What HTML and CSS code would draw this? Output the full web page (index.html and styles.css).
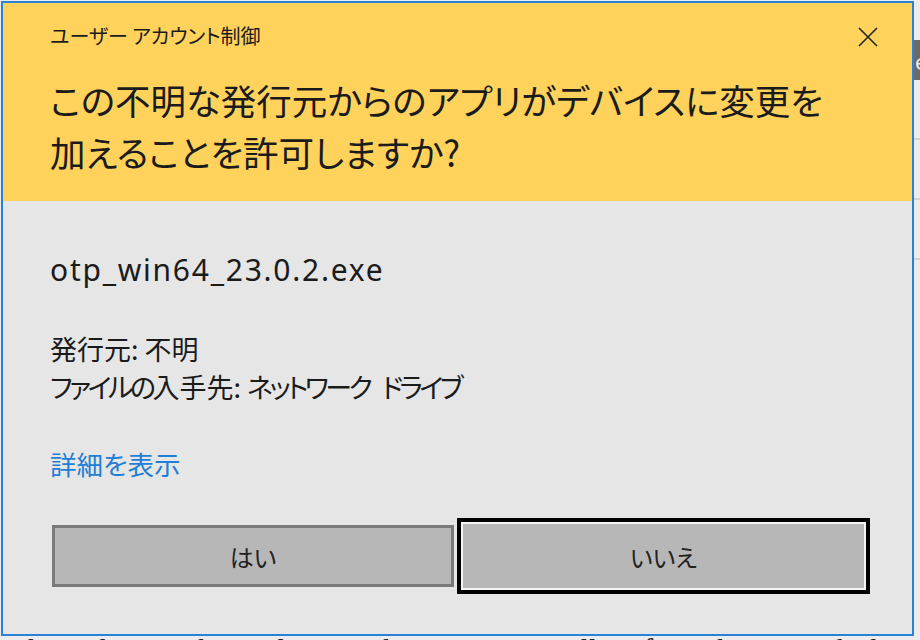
FILE: index.html
```html
<!DOCTYPE html>
<html lang="ja">
<head>
    <meta charset="utf-8">
    <title>ユーザー アカウント制御</title>
    <link rel="stylesheet" href="styles.css">
</head>
<body>
<div class="page">
    <div class="page-side">
        <div class="side-tab">e</div>
        <div class="side-rule"></div>
        <div class="side-rule"></div>
        <div class="side-rule"></div>
    </div>
    <p class="page-text">depending on the application that you are installing from the network share</p>
</div>

<div class="uac" role="dialog">
    <div class="uac-head">
        <div class="uac-titlebar">
            <span class="uac-title">ユーザー アカウント制御</span>
            <span class="uac-close">
                <svg width="20" height="20" viewBox="0 0 20 20"><path d="M1 1 L19 19 M19 1 L1 19" stroke="#222" stroke-width="1.6" fill="none"/></svg>
            </span>
        </div>
        <h1 class="uac-question">この不明な発行元からのアプリがデバイスに変更を<br>加えることを許可しますか?</h1>
    </div>
    <div class="uac-body">
        <div class="uac-file">otp_win64_23.0.2.exe</div>
        <div class="uac-info">
            <div>発行元: 不明</div>
            <div><span class="kana">ファイルの</span>入手先: <span class="kana">ネットワーク</span> <span class="kana gap">ドライブ</span></div>
        </div>
        <a class="uac-more" href="#">詳細を表示</a>
        <div class="uac-buttons">
            <button class="btn">はい</button>
            <button class="btn btn-focus">いいえ</button>
        </div>
    </div>
</div>
</body>
</html>
```

FILE: styles.css
```css
html{margin: 0; padding: 0;}
body{margin: 0; padding: 0; width: 920px; height: 640px; overflow: hidden; background: #ececec; font-family: "Noto Sans CJK JP", sans-serif; color: #1b1b1b;}

/* page behind the dialog */
.page{position: relative; height: 640px;}
.page-side{margin-left: 914px; padding-top: 40px; display: flex; flex-direction: column;}
.side-tab{height: 40px; background: #6a6a6a; color: #eee; font-size: 22px; line-height: 40px; padding-left: 1px; overflow: hidden;}
.side-rule{height: 2px; background: #d2d2d2; margin-top: 58px;}
.side-rule:first-of-type{margin-top: 241px;}
.page-text{position: absolute; left: 20px; top: 632px; margin: 0; font-family: "Liberation Serif", serif; font-size: 30px; color: #222; white-space: nowrap;}

/* dialog */
.uac{position: absolute; left: 1px; top: 1px; width: 909px; height: 631px; border: 2px solid #2a81d8; background: #e6e6e6; display: flex; flex-direction: column; font-feature-settings: "palt";}
.uac-head{background: #fed25b; height: 198px; padding: 0 34px 0 47px; box-sizing: border-box;}
.uac-titlebar{display: flex; justify-content: space-between; align-items: center; padding-top: 21px; height: 24px;}
.uac-title{font-size: 20px; line-height: 24px;}
.uac-close{display: flex; width: 20px; height: 20px; margin-top: 2px;}
.uac-question{margin: 26px 0 0 0; font-size: 35.5px; line-height: 52px; font-weight: normal;}

.uac-body{flex: 1; padding: 49px 0 0 47px; display: flex; flex-direction: column;}
.uac-file{font-family: "Noto Sans", sans-serif; font-size: 30px; line-height: 40px; letter-spacing: 1.75px;}
.uac-info{margin-top: 40px; font-size: 27px; line-height: 38px;}
.uac-info .kana{letter-spacing: -3.4px;}
.uac-info .gap{margin-left: 6px;}
.uac-more{margin-top: 39px; font-size: 26.5px; line-height: 38px; color: #1f7fd6; text-decoration: none; align-self: flex-start;}

.uac-buttons{display: flex; align-items: center; gap: 3px; margin-top: 35px; margin-left: 2px;}
.btn{width: 402px; height: 62px; border: 3px solid #7a7a7a; background: #b7b7b7; font-family: "Noto Sans CJK JP", sans-serif; font-feature-settings: "palt"; font-size: 24px; color: #222; padding: 0; box-sizing: border-box;}
.btn-focus{width: 413px; height: 76px; border: 4px solid #000; box-shadow: inset 0 0 0 2px #f4f4f4;}
```
